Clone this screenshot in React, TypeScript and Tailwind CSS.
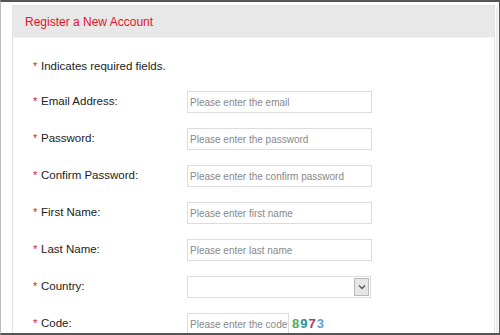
import React from "react";

const rows = [
  { label: "Email Address:", ph: "Please enter the email", type: "input" },
  { label: "Password:", ph: "Please enter the password", type: "input" },
  { label: "Confirm Password:", ph: "Please enter the confirm password", type: "input" },
  { label: "First Name:", ph: "Please enter first name", type: "input" },
  { label: "Last Name:", ph: "Please enter last name", type: "input" },
  { label: "Country:", ph: "", type: "select" },
  { label: "Code:", ph: "Please enter the code", type: "code" },
];

function Label({ text }: { text: string }) {
  return (
    <div className="w-[154px] flex items-center text-[11.5px] text-[#222]">
      <span className="text-[#e0142c] w-[8px] text-[11px] leading-none -mt-[2px]">*</span>
      <span>{text}</span>
    </div>
  );
}

export default function App() {
  return (
    <div
      className="w-[500px] h-[335px] bg-white border-t-2 border-b-2 border-r border-l border-t-[#555] border-b-[#555] border-r-[#555] border-l-[#bbb] overflow-hidden flex pl-[11px] pt-[3px]"
      style={{ fontFamily: '"Liberation Sans", Arial, sans-serif' }}
    >
      <div className="w-[483px] h-[340px] border border-[#e2e2e2] flex flex-col">
        <div className="h-[32px] bg-[#e8e8e8] border-b border-[#f2f2f2] flex items-center pl-[12px] text-[12px] text-[#e8102a]">
          Register a New Account
        </div>
        <div className="flex flex-col pl-[20px] pt-[23px]">
          <div className="flex items-center h-[12px] text-[11.5px] text-[#222]">
            <span className="text-[#e0142c] w-[8px] text-[11px] leading-none -mt-[2px]">*</span>
            <span>Indicates required fields.</span>
          </div>
          <div className="flex flex-col gap-[15px] mt-[18px]">
            {rows.map((r) => (
              <div key={r.label} className="flex items-center h-[22px]">
                <Label text={r.label} />
                {r.type === "input" && (
                  <div className="w-[185px] h-[22px] border border-[#dcdcdc] flex items-center pl-[2px] text-[10px] text-[#888]">
                    {r.ph}
                  </div>
                )}
                {r.type === "select" && (
                  <div className="w-[184px] h-[22px] border border-[#dcdcdc] flex items-center justify-end pr-[1px]">
                    <div className="w-[15px] h-[18px] bg-[#e6e6e6] border border-[#b8b8b8] flex items-center justify-center">
                      <svg width="8" height="6" viewBox="0 0 8 6">
                        <path d="M1 1.5 L4 4.5 L7 1.5" fill="none" stroke="#555" strokeWidth="1.3" />
                      </svg>
                    </div>
                  </div>
                )}
                {r.type === "code" && (
                  <div className="flex items-center">
                    <div className="w-[102px] h-[22px] border border-[#dcdcdc] flex items-center pl-[2px] text-[10px] text-[#888] whitespace-nowrap overflow-hidden">
                      {r.ph}
                    </div>
                    <div className="ml-[3px] text-[13px] font-bold tracking-[1px]">
                      <span className="text-[#4daa57]">8</span>
                      <span className="text-[#2f8f8a]">9</span>
                      <span className="text-[#a33a6a]">7</span>
                      <span className="text-[#5aa5d6]">3</span>
                    </div>
                  </div>
                )}
              </div>
            ))}
          </div>
        </div>
      </div>
      <div className="w-[2px] h-[340px] bg-[#eeeeee] mt-[2px] ml-[1px]" />
    </div>
  );
}
